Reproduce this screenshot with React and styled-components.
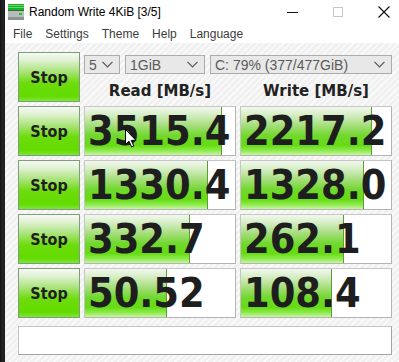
import React from "react";
import styled, { createGlobalStyle } from "styled-components";

const Global = createGlobalStyle`
  html, body {
    margin: 0;
    padding: 0;
    background: #1c1c1c;
    overflow: hidden;
  }
  * { box-sizing: border-box; }
`;

const Screen = styled.div`
  display: flex;
  width: 399px;
  height: 362px;
  overflow: hidden;
`;

const DarkStrip = styled.div`
  width: 5px;
  flex-shrink: 0;
  background: linear-gradient(to right, #141414, #262626 60%, #1a1a1a);
`;

const Window = styled.div`
  flex: 1;
  display: flex;
  flex-direction: column;
  background: #fff;
`;

const TitleBar = styled.div`
  height: 24px;
  flex-shrink: 0;
  display: flex;
  align-items: center;
  padding-left: 3px;
  gap: 5px;
  background: #fff;
`;

const Title = styled.div`
  font-family: "Liberation Sans", Arial, sans-serif;
  font-size: 12px;
  color: #000;
`;

const Controls = styled.div`
  margin-left: auto;
  display: flex;
  align-items: center;
  padding-right: 9px;
  gap: 35px;
`;

const MenuBar = styled.div`
  height: 19px;
  flex-shrink: 0;
  display: flex;
  align-items: center;
  gap: 13px;
  padding-left: 8px;
  background: #fff;
`;

const MenuItem = styled.span`
  font-family: "Liberation Sans", Arial, sans-serif;
  font-size: 12px;
  color: #3c3c3c;
`;

const Content = styled.div`
  flex: 1;
  min-height: 0;
  padding: 9px 0 0 13px;
  background: repeating-linear-gradient(
    135deg,
    #f1f1f1 0px,
    #f1f1f1 3px,
    #fafafa 3px,
    #fafafa 4.5px
  );
`;

const Grid = styled.div`
  display: grid;
  grid-template-columns: 62px 152px 152px;
  grid-template-rows: repeat(5, 50px) auto;
  column-gap: 4px;
  row-gap: 4px;
`;

const StopButton = styled.div`
  display: flex;
  align-items: center;
  justify-content: center;
  border: 1px solid #7f9c7f;
  background: linear-gradient(
    to bottom,
    #f6f9f3 0%,
    #e2f2d6 14%,
    #a6e374 40%,
    #6ddc0c 62%,
    #63db00 90%,
    #7fe63a 100%
  );
  font-family: "DejaVu Sans Condensed", "DejaVu Sans", sans-serif;
  font-stretch: condensed;
  font-weight: bold;
  font-size: 16px;
  color: #1f1f1f;
`;

const TopControls = styled.div`
  grid-column: 2 / 4;
  display: flex;
  flex-direction: column;
`;

const ComboRow = styled.div`
  margin-top: 3px;
  display: flex;
  gap: 5px;
`;

const Combo = styled.div`
  width: ${({ $w }) => $w}px;
  height: 19px;
  display: flex;
  align-items: center;
  justify-content: space-between;
  padding: 0 6px 0 4px;
  border: 1px solid #acacac;
  background: #e8e8e8;
  font-family: "Liberation Sans", Arial, sans-serif;
  font-size: 14px;
  color: #5a5a5a;
  white-space: nowrap;
`;

const HeaderRow = styled.div`
  margin-top: 5px;
  display: grid;
  grid-template-columns: 152px 152px;
  column-gap: 4px;
`;

const Header = styled.div`
  height: 24px;
  line-height: 24px;
  text-align: center;
  font-family: "DejaVu Sans", Verdana, sans-serif;
  font-weight: bold;
  font-size: 15px;
  color: #222;
`;

const ValueBox = styled.div`
  position: relative;
  overflow: hidden;
  white-space: nowrap;
  border: 1px solid #c6c6c6;
  border-right-color: #b4b4b4;
  border-bottom-color: #b4b4b4;
  padding-left: 3px;
  display: flex;
  align-items: center;
  background:
    linear-gradient(#5c9e34, #5c9e34) no-repeat ${({ $fill }) => $fill - 1}px 0 / 1px 100%,
    linear-gradient(
      to bottom,
      #f3f7f0 0%,
      #d6eec6 16%,
      #a2dd76 40%,
      #70d82c 60%,
      #66dc12 80%,
      #8fea50 91%,
      #c8f5a2 100%
    ) no-repeat 0 0 / ${({ $fill }) => $fill}px 100%,
    #fff;
  font-family: "DejaVu Sans Condensed", "DejaVu Sans", sans-serif;
  font-stretch: condensed;
  font-weight: bold;
  font-size: 41px;
  color: #1e1e1e;
`;

const StatusBox = styled.div`
  grid-column: 1 / 4;
  height: 29px;
  margin-top: 4px;
  border: 1px solid #c4c4c4;
  border-right-color: #a4a4a4;
  border-bottom-color: #a4a4a4;
  background: #fff;
`;

const Cursor = styled.svg`
  position: absolute;
  left: 40px;
  top: 22px;
`;

const AppIcon = () => (
  <svg width="16" height="16" viewBox="0 0 16 16">
    <rect x="0" y="0" width="16" height="6" fill="#1fae2a" />
    <rect x="0" y="1" width="16" height="1" fill="#5fd865" />
    <rect x="0" y="3" width="16" height="1" fill="#5fd865" />
    <rect x="0" y="6" width="16" height="1" fill="#2f6f3a" />
    <rect x="0" y="7" width="16" height="9" fill="#b8bcbc" />
    <rect x="0" y="13" width="16" height="3" fill="#8d9292" />
    <rect x="11" y="9" width="3" height="2" fill="#29c22f" />
  </svg>
);

const Chevron = () => (
  <svg width="11" height="7" viewBox="0 0 11 7">
    <path d="M0.5 0.8 L5.5 5.8 L10.5 0.8" fill="none" stroke="#555" strokeWidth="1.2" />
  </svg>
);

const rows = [
  { read: "3515.4", rf: 137, write: "2217.2", wf: 131 },
  { read: "1330.4", rf: 123, write: "1328.0", wf: 123 },
  { read: "332.7", rf: 105, write: "262.1", wf: 103 },
  { read: "50.52", rf: 82, write: "108.4", wf: 91 },
];

export default function App() {
  return (
    <>
      <Global />
      <Screen>
        <DarkStrip />
        <Window>
          <TitleBar>
            <AppIcon />
            <Title>Random Write 4KiB [3/5]</Title>
            <Controls>
              <svg width="11" height="11" viewBox="0 0 11 11">
                <rect x="0" y="5" width="11" height="1" fill="#111" />
              </svg>
              <svg width="10" height="10" viewBox="0 0 10 10">
                <rect x="0.5" y="0.5" width="9" height="9" fill="none" stroke="#c8c8c8" />
              </svg>
              <svg width="12" height="12" viewBox="0 0 12 12">
                <path d="M0.5 0.5 L11.5 11.5 M11.5 0.5 L0.5 11.5" stroke="#111" strokeWidth="1.1" />
              </svg>
            </Controls>
          </TitleBar>
          <MenuBar>
            <MenuItem>File</MenuItem>
            <MenuItem>Settings</MenuItem>
            <MenuItem>Theme</MenuItem>
            <MenuItem>Help</MenuItem>
            <MenuItem>Language</MenuItem>
          </MenuBar>
          <Content>
            <Grid>
              <StopButton>Stop</StopButton>
              <TopControls>
                <ComboRow>
                  <Combo $w={36}>5<Chevron /></Combo>
                  <Combo $w={80}>1GiB<Chevron /></Combo>
                  <Combo $w={182}>C: 79% (377/477GiB)<Chevron /></Combo>
                </ComboRow>
                <HeaderRow>
                  <Header>Read [MB/s]</Header>
                  <Header>Write [MB/s]</Header>
                </HeaderRow>
              </TopControls>
              {rows.map((r, i) => (
                <React.Fragment key={i}>
                  <StopButton>Stop</StopButton>
                  <ValueBox $fill={r.rf}>
                    {r.read}
                    {i === 0 && (
                      <Cursor width="12" height="19" viewBox="0 0 12 19">
                        <path
                          d="M0.5 0.5 L0.5 15.5 L4 12.2 L6.6 18 L8.8 17 L6.3 11.4 L11 11.4 Z"
                          fill="#fff"
                          stroke="#000"
                          strokeWidth="1"
                        />
                      </Cursor>
                    )}
                  </ValueBox>
                  <ValueBox $fill={r.wf}>{r.write}</ValueBox>
                </React.Fragment>
              ))}
              <StatusBox />
            </Grid>
          </Content>
        </Window>
      </Screen>
    </>
  );
}
